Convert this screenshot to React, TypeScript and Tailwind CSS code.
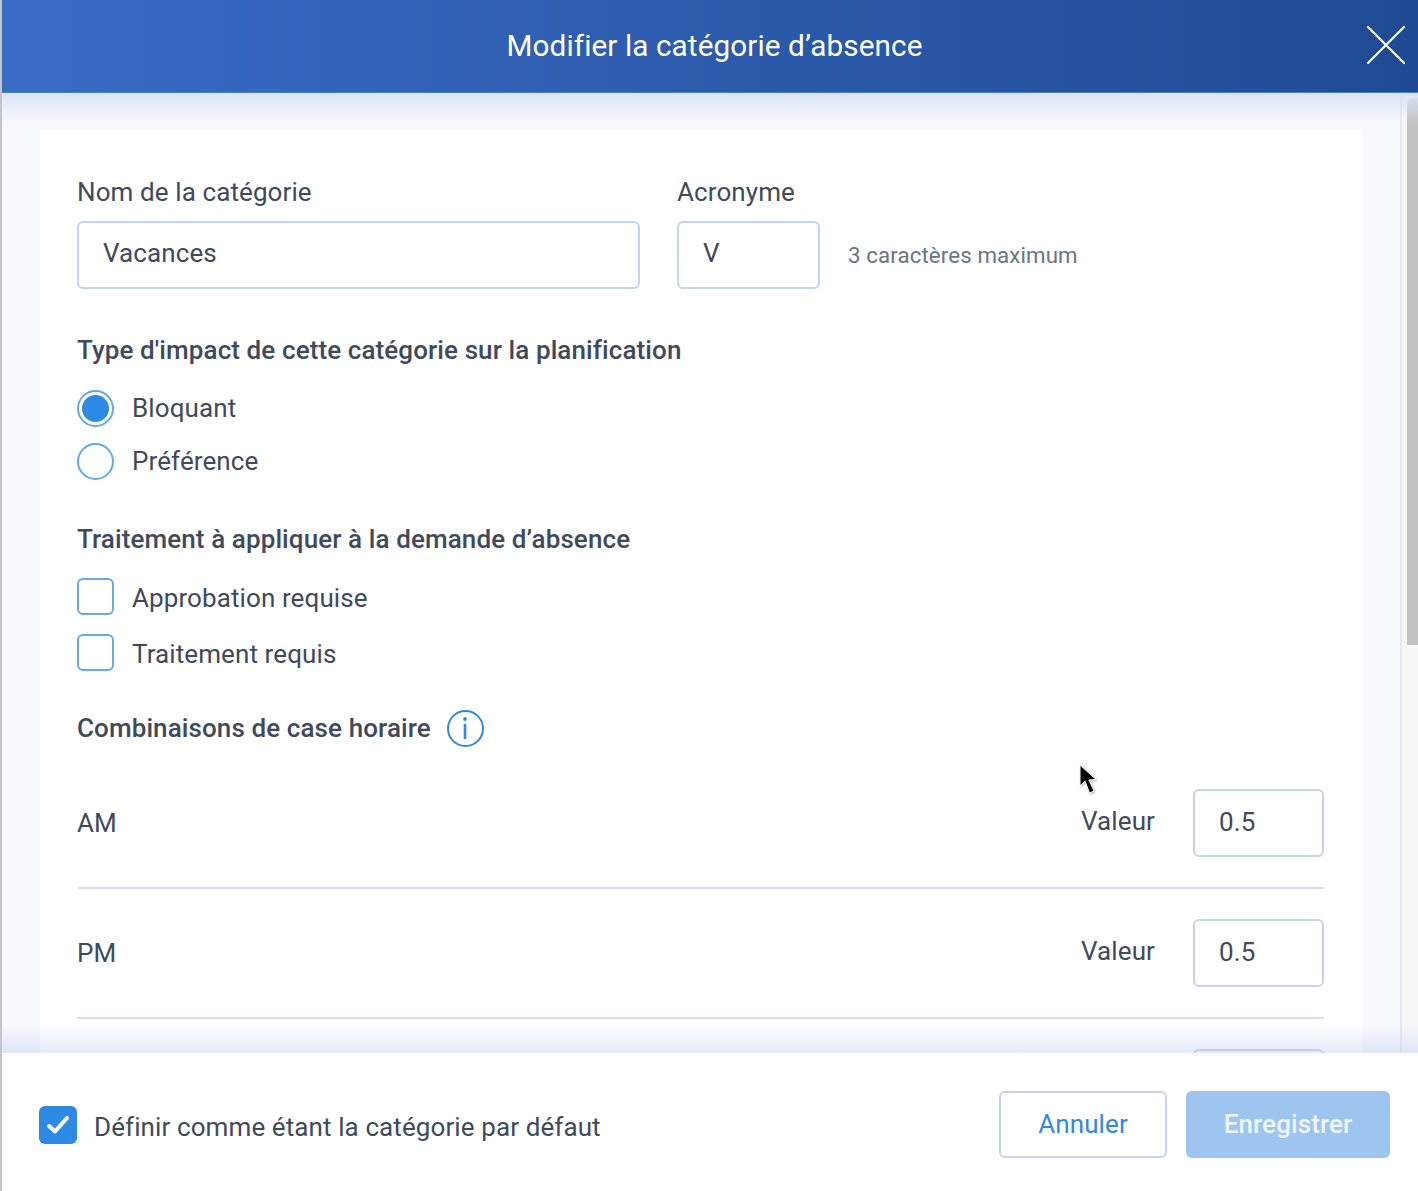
import { ReactNode } from 'react';

function TextBox({ value, className }: { value: string; className: string }) {
  return (
    <div className={`h-[68px] flex items-center pl-[24px] bg-white border-2 border-[#c3d3f2] rounded-[6px] text-[26px] text-[#3f4a5c] ${className}`}>
      {value}
    </div>
  );
}

function Radio({ checked, label }: { checked?: boolean; label: string }) {
  return (
    <div className="h-[37px] flex items-center gap-[18px]">
      <div className="w-[37px] h-[37px] rounded-full border-2 border-[#64a8ee] flex items-center justify-center">
        {checked && <div className="w-[27px] h-[27px] rounded-full bg-[#2e89e4]" />}
      </div>
      <span className="text-[26px] text-[#3f4a5c]">{label}</span>
    </div>
  );
}

function Check({ label }: { label: string }) {
  return (
    <div className="h-[37px] flex items-center gap-[18px]">
      <div className="w-[37px] h-[37px] mb-[2px] rounded-[6px] border-2 border-[#64a8ee]" />
      <span className="text-[26px] text-[#3f4a5c] pt-[2px]">{label}</span>
    </div>
  );
}

function Heading({ children }: { children: ReactNode }) {
  return <div className="text-[26px] font-medium text-[#3f4a5c] leading-[38px]">{children}</div>;
}

function SlotRow({ name, value }: { name: string; value: string }) {
  return (
    <div className="h-[130px] border-b-2 border-[#d3e0f5] flex items-start pt-[30px]">
      <div className="flex-1 h-[68px] flex items-center text-[26px] text-[#3f4a5c]">{name}</div>
      <div className="h-[64px] flex items-center text-[26px] text-[#3f4a5c] mr-[38px]">Valeur</div>
      <TextBox value={value} className="w-[131px] pb-[2px]" />
    </div>
  );
}

export default function App() {
  return (
    <div className="relative h-[1191px] overflow-hidden flex bg-white tracking-[0.1px] font-['Roboto',sans-serif]">
      <div className="w-[2px] shrink-0 bg-[#c4c5ca]" />
      <div className="flex-1 min-w-0 flex flex-col">
        <header className="relative z-10 h-[93px] shrink-0 flex items-center justify-center pl-[9px] pt-[1px] bg-gradient-to-r from-[#3a6cc6] to-[#1f4a93] border-b border-[#4a7ed0]">
          <h1 className="text-[29.7px] font-normal text-white">Modifier la catégorie d’absence</h1>
          <button className="absolute right-[12px] top-[25px] w-[40px] h-[40px] text-white">
            <svg width="40" height="40" viewBox="0 0 40 40" fill="none" stroke="currentColor" strokeWidth="2.2" strokeLinecap="round">
              <path d="M2 2 L38 38 M38 2 L2 38" />
            </svg>
          </button>
        </header>

        <div className="relative flex-1 min-h-0 flex bg-[#f7f9fd]">
          <div className="absolute inset-x-0 top-0 h-[30px] bg-gradient-to-b from-[#dbe4f5] to-transparent z-[5]" />
          <div className="absolute inset-x-0 bottom-0 h-[30px] bg-gradient-to-t from-[#b9cbee]/40 to-transparent z-[5]" />

          <div className="flex-1 min-w-0 overflow-hidden pt-[37px] pl-[38px] pr-[38px]">
            <div className="bg-white px-[37px] pr-[38px] pt-[43px] h-[1000px]">
              <div className="flex items-start">
                <div className="w-[563px] mr-[37px]">
                  <div className="text-[26px] leading-[38px] text-[#3f4a5c] mb-[10px]">Nom de la catégorie</div>
                  <TextBox value="Vacances" className="w-full pb-[4px]" />
                </div>
                <div>
                  <div className="text-[26px] leading-[38px] text-[#3f4a5c] mb-[10px]">Acronyme</div>
                  <div className="flex items-center">
                    <TextBox value="V" className="w-[143px] pb-[4px]" />
                    <span className="ml-[28px] pt-[2px] text-[22.3px] text-[#6a7585]">3 caractères maximum</span>
                  </div>
                </div>
              </div>

              <div className="mt-[42px]">
                <Heading>Type d'impact de cette catégorie sur la planification</Heading>
                <div className="mt-[21px] flex flex-col gap-[16px]">
                  <Radio checked label="Bloquant" />
                  <Radio label="Préférence" />
                </div>
              </div>

              <div className="mt-[40px]">
                <Heading>Traitement à appliquer à la demande d’absence</Heading>
                <div className="mt-[21px] flex flex-col gap-[19px]">
                  <Check label="Approbation requise" />
                  <Check label="Traitement requis" />
                </div>
              </div>

              <div className="mt-[37px] flex items-center gap-[16px]">
                <Heading>Combinaisons de case horaire</Heading>
                <div className="w-[37px] h-[37px] rounded-full border-[2.5px] border-[#2e89e4] flex items-center justify-center">
                  <svg width="6" height="22" viewBox="0 0 6 22" fill="#2e89e4">
                    <circle cx="3" cy="2" r="1.9" />
                    <rect x="1.7" y="7" width="2.6" height="15" rx="0.6" />
                  </svg>
                </div>
              </div>

              <div className="mt-[12px]">
                <SlotRow name="AM" value="0.5" />
                <SlotRow name="PM" value="0.5" />
                <div className="flex justify-end pt-[30px]">
                  <TextBox value="" className="w-[131px]" />
                </div>
              </div>
            </div>
          </div>

          <div className="w-[18px] shrink-0 border-l-2 border-[#e6e8ee] bg-[#f8f8f9] pl-[5px] pt-[5px]">
            <div className="w-[11px] h-[547px] bg-[#c2c2c2] rounded-tl-[6px]" />
          </div>
        </div>

        <footer className="relative z-10 h-[138px] shrink-0 bg-white flex items-center pt-[5px] pl-[37px] pr-[28px]">
          <div className="flex items-center gap-[17px] flex-1">
            <div className="w-[38px] h-[38px] rounded-[6px] bg-[#2e89e4] flex items-center justify-center">
              <svg width="24" height="20" viewBox="0 0 24 20" fill="none" stroke="white" strokeWidth="4" strokeLinecap="round" strokeLinejoin="round">
                <path d="M3 11 L9 16.5 L21 3" />
              </svg>
            </div>
            <span className="pt-[6px] text-[26px] text-[#3f4a5c]">Définir comme étant la catégorie par défaut</span>
          </div>
          <button className="w-[168px] h-[67px] rounded-[6px] border-2 border-[#c3d3f2] bg-white text-[26px] text-[#2e89e4]">Annuler</button>
          <button className="w-[204px] h-[67px] ml-[19px] rounded-[6px] bg-[#9dc5f0] text-[26px] font-medium text-[#eef5fd]">Enregistrer</button>
        </footer>
      </div>

      <svg className="absolute left-[1078px] top-[763px] z-20 drop-shadow-[1px_1px_1px_rgba(0,0,0,0.3)]" width="22" height="32" viewBox="0 0 22 32">
        <path d="M2 2 L2 23 L7 18 L11.5 30 L16 28 L11 17 L18 16.5 Z" fill="#000" stroke="#fff" strokeWidth="1" />
      </svg>
    </div>
  );
}
